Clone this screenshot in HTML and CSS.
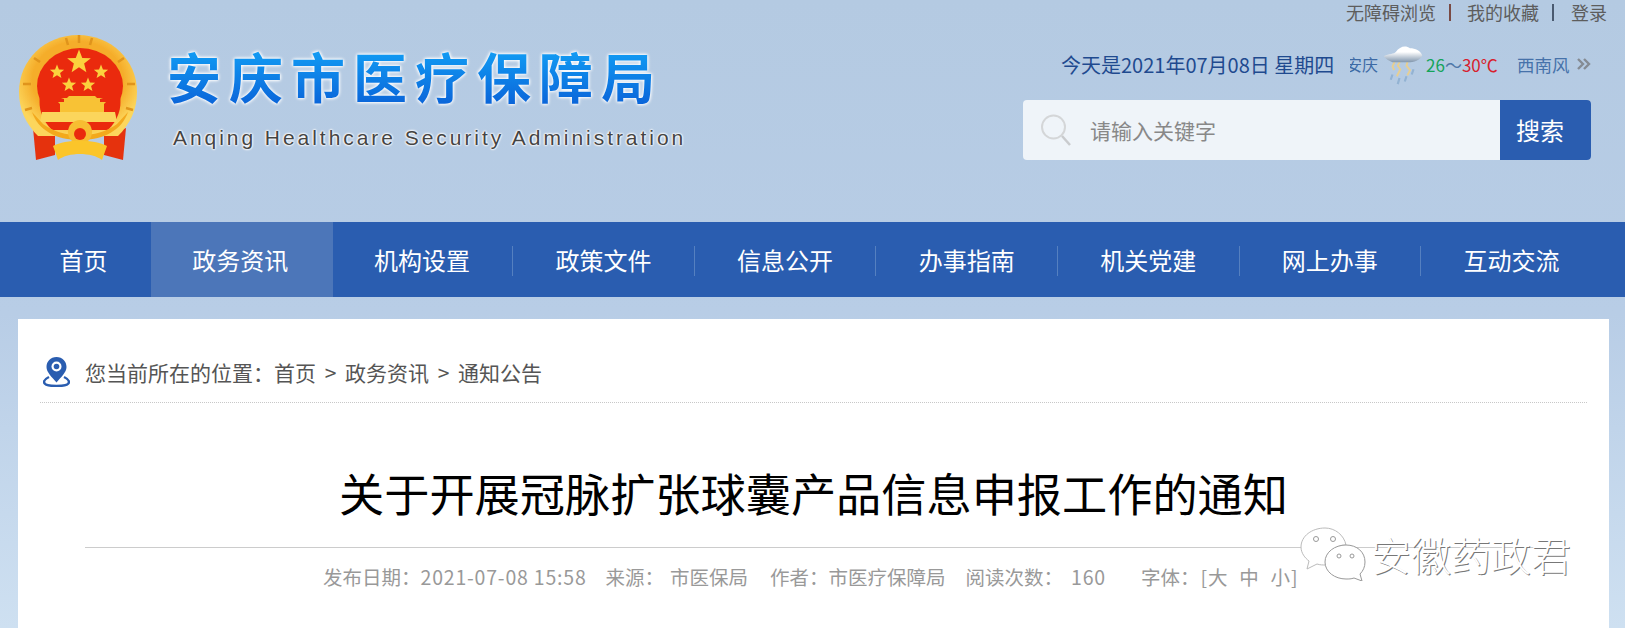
FILE: index.html
```html
<!DOCTYPE html>
<html lang="zh-CN">
<head>
    <meta charset="UTF-8">
    <title>关于开展冠脉扩张球囊产品信息申报工作的通知</title>
    <link rel="stylesheet" href="styles.css">
</head>
<body>
    <header class="header">
        <div class="logo">
            <svg class="emblem" viewBox="0 0 120 128">
                <defs>
                    <radialGradient id="ring" cx="50%" cy="45%" r="55%">
                        <stop offset="70%" stop-color="#f5ad2a"/>
                        <stop offset="100%" stop-color="#fcd65c"/>
                    </radialGradient>
                    <filter id="blur"><feGaussianBlur stdDeviation="0.45"/></filter>
                    <polygon id="star" points="0,-10 2.600,-3.200 9.500,-3.100 4.100,1.200 5.900,8.100 0,4.200 -5.900,8.100 -4.100,1.200 -9.500,-3.100 -2.600,-3.200"/>
                </defs>
                <g filter="url(#blur)">
                    <path d="M15 94l22 8v19l-19 5zM108 94l-22 8v19l19 5z" fill="#e5320f"/>
                    <path d="M60 1C27 1 1 26 1 58C1 76 8 90 20 102H100C112 90 119 76 119 58C119 26 93 1 60 1z" fill="url(#ring)"/>
                    <ellipse cx="62" cy="52" rx="43" ry="38" fill="#ea2a10"/>
                    <path d="M22 62C20 74 24 86 34 96H90C100 86 104 74 102 62z" fill="#ea2a10"/>
                    <path d="M48 4l2 7M74 4l-2 7M61 1v8M16 24l6 4M106 24l-6 4M5 50h8M117 50h-8M7 76l7-2M115 76l-7-2" stroke="#e0941a" stroke-width="2.500"/>
                    <use href="#star" transform="translate(61 28) scale(1.250)" fill="#fbd23e"/>
                    <use href="#star" transform="translate(39 38) scale(0.750)" fill="#fbd23e"/>
                    <use href="#star" transform="translate(83 38) scale(0.750)" fill="#fbd23e"/>
                    <use href="#star" transform="translate(51 51) scale(0.750)" fill="#fbd23e"/>
                    <use href="#star" transform="translate(70 51) scale(0.750)" fill="#fbd23e"/>
                    <path d="M42 78v-8l-2-2h6v-3l-3-1h6l2-2h26l2 2h6l-3 1v3h6l-2 2v8z" fill="#f8c234"/>
                    <path d="M24 78h73l2 10H22z" fill="#fbd55c"/>
                    <path d="M14 78C20 96 38 106 62 106S104 96 110 78L99 90C88 98 76 101 62 101S36 98 25 90z" fill="#f3a91f"/>
                    <circle cx="62" cy="98" r="12" fill="#f7bd30"/>
                    <circle cx="62" cy="100" r="6" fill="#ea2a10"/>
                    <path d="M35 112C48 105 76 105 89 112L84 126C74 118 50 118 40 126z" fill="#fbc52c"/>
                </g>
            </svg>
            <div class="logo-text">
                <div class="logo-cn">安庆市医疗保障局</div>
                <div class="logo-en">Anqing Healthcare Security Administration</div>
            </div>
        </div>
        <div class="tools">
            <div class="top-links">
                <a>无障碍浏览</a><i class="sep"></i><a>我的收藏</a><i class="sep sep-dark"></i><a>登录</a>
            </div>
            <div class="info-row">
                <span class="today">今天是2021年07月08日 星期四</span>
                <span class="city"><span>安庆</span></span>
                <svg class="weather-icon" viewBox="0 0 48 48">
                    <defs>
                        <filter id="soft"><feGaussianBlur stdDeviation="0.8"/></filter>
                        <linearGradient id="cloud" x1="0" y1="0" x2="0" y2="1">
                            <stop offset="0.350" stop-color="#ffffff"/>
                            <stop offset="1" stop-color="#8196ad"/>
                        </linearGradient>
                    </defs>
                    <g filter="url(#soft)">
                        <path d="M22 18l-4 8 3 4-4 8M30 18l-2 8 4 5-3 6M15 20l-3 7 2 4" fill="none" stroke="#e7cf92" stroke-width="2.200"/>
                        <path d="M12 36l-2 6M20 40l-2 7M28 38l-2 6M36 30l-2 6" stroke="#93b3d3" stroke-width="2.500"/>
                        <path d="M2 15C8 12 14 13 16 10C20 4 27 2 32 6C38 6 44 9 46 14C44 20 36 22 30 22H12C8 20 4 18 2 15z" fill="url(#cloud)"/>
                    </g>
                </svg>
                <span class="temp"><b class="low">26</b>～<b class="high">30</b><b class="high">℃</b></span>
                <span class="wind">西南风</span>
                <svg class="more" viewBox="0 0 14 14">
                    <path d="M1 2l5 5-5 5M7 2l5 5-5 5" fill="none" stroke="#858b93" stroke-width="2.400"/>
                </svg>
            </div>
            <form class="search">
                <svg class="search-icon" viewBox="0 0 32 32">
                    <circle cx="13.500" cy="13" r="11.500" fill="none" stroke="#d4d6d8" stroke-width="2"/>
                    <path d="M22 22l8 9" stroke="#c9cbce" stroke-width="2.500"/>
                </svg>
                <span class="search-hint">请输入关键字</span>
                <span class="search-btn">搜索</span>
            </form>
        </div>
    </header>

    <nav class="nav">
        <a class="nav-first">首页</a>
        <a class="active">政务资讯</a>
        <a class="no-line">机构设置</a>
        <a>政策文件</a>
        <a>信息公开</a>
        <a>办事指南</a>
        <a>机关党建</a>
        <a>网上办事</a>
        <a>互动交流</a>
    </nav>

    <main class="panel">
        <div class="crumbs">
            <svg class="pin" viewBox="0 0 27 31">
                <path d="M13.500 1C7.500 1 3.500 5.500 3.500 11C3.500 16.500 9 21 13.500 26.500C18 21 23.500 16.500 23.500 11C23.500 5.500 19.500 1 13.500 1z" fill="#2a5db0"/>
                <circle cx="13.500" cy="10.500" r="5" fill="#fff"/>
                <circle cx="13.500" cy="10.500" r="2.800" fill="#2a5db0"/>
                <path d="M6 21C3 22.500 1 24 1 26C1 29 7 30 13.500 30S26 29 26 26C26 24 24 22.500 21 21" fill="none" stroke="#2a5db0" stroke-width="2.500"/>
            </svg>
            <span>您当前所在的位置：首页 &gt; 政务资讯 &gt; 通知公告</span>
        </div>
        <h1 class="title">关于开展冠脉扩张球囊产品信息申报工作的通知</h1>
        <div class="meta">
            <span class="m-date">发布日期：<span class="num">2021-07-08 15:58</span></span>
            <span class="m-src">来源：</span>
            <span class="m-org">市医保局</span>
            <span class="m-author">作者：市医疗保障局</span>
            <span class="m-read">阅读次数：</span>
            <span class="m-count num">160</span>
            <span class="m-font">字体：</span>
            <span class="m-size">[大&nbsp;&nbsp;中&nbsp;&nbsp;小]</span>
        </div>
    </main>

    <div class="watermark">
        <svg class="wx" viewBox="0 0 66 54">
            <path d="M25 1C12 1 1 9 1 20C1 26 5 31 9 34L7 42L17 37C20 38 23 38 26 38C26 26 36 18 46 18C44 8 35 1 25 1z" fill="#fff" stroke="#bbb" stroke-width="1"/>
            <path d="M46 18C35 18 25 25 25 35C25 45 35 52 46 52C49 52 51 52 54 51L62 54L60 47C63 44 65 40 65 35C65 25 57 18 46 18z" fill="#fff" stroke="#999" stroke-width="1"/>
            <circle cx="16" cy="12" r="2.500" fill="#fff" stroke="#999"/>
            <circle cx="33" cy="12" r="2.500" fill="#fff" stroke="#999"/>
            <circle cx="39" cy="29" r="2" fill="#fff" stroke="#999"/>
            <circle cx="52" cy="29" r="2" fill="#fff" stroke="#999"/>
        </svg>
        <span class="wx-name">安徽药政君</span>
    </div>
</body>
</html>
```

FILE: styles.css
```css
* {
    box-sizing: border-box;
}
html, body {
    margin: 0;
    height: 628px;
    overflow: hidden;
}
body {
    font-family: "Noto Sans CJK SC", "Open Sans", sans-serif;
    background: linear-gradient(#b4cae2, #b8cde6 50%, #cee0f1);
    color: #333;
    position: relative;
}
.header {
    height: 222px;
    display: flex;
    justify-content: space-between;
}
.logo {
    display: flex;
    padding: 34px 0 0 18px;
}
.emblem {
    width: 120px;
    height: 128px;
}
.logo-text {
    margin-left: 29px;
    padding-top: 11px;
}
.logo-cn {
    font-size: 54px;
    line-height: 62px;
    font-weight: 700;
    letter-spacing: 8px;
    white-space: nowrap;
    background: linear-gradient(#12a2f7, #0a62d8);
    -webkit-background-clip: text;
    background-clip: text;
    color: transparent;
    filter: drop-shadow(0 0 1.5px #fff) drop-shadow(0 0 1.5px #fff);
}
.logo-en {
    font-family: "Liberation Sans", sans-serif;
    font-size: 21px;
    line-height: 24px;
    letter-spacing: 2.95px;
    margin: 19px 0 0 6px;
    color: #444;
    white-space: nowrap;
    text-shadow: 0 0 2px #fff, 0 0 2px #fff, 0 0 2px #fff, 0 0 3px #fff;
}
.tools {
    width: 602px;
    padding-right: 34px;
    display: flex;
    flex-direction: column;
    align-items: flex-end;
}
.top-links {
    display: flex;
    align-items: center;
    height: 24px;
    font-size: 18px;
    color: #5d5d5d;
    margin-right: -16px;
}
.sep {
    width: 2px;
    height: 17px;
    margin: 0 16px 0 13px;
    background: #7a4a44;
}
.sep-dark {
    margin-right: 17px;
    background: #4a5a70;
}
.info-row {
    display: flex;
    align-items: center;
    height: 48px;
    margin-top: 16px;
    width: 100%;
    padding-left: 38px;
}
.today {
    font-size: 20px;
    color: #1f4a8f;
    white-space: nowrap;
    width: 294px;
}
.city {
    width: 28px;
    overflow: hidden;
    font-size: 16px;
    color: #3d6aa5;
    direction: rtl;
    white-space: nowrap;
    flex: none;
}
.weather-icon {
    width: 42px;
    height: 46px;
    flex: none;
    margin: 0 2px 0 4px;
}
.temp {
    font-size: 17px;
    color: #4f77a8;
    width: 91px;
    white-space: nowrap;
    flex: none;
}
.temp b {
    font-weight: 400;
}
.low {
    color: #14a45a;
}
.high {
    color: #d8202c;
}
.wind {
    font-size: 17.500px;
    color: #4672aa;
    width: 60px;
    white-space: nowrap;
    flex: none;
}
.more {
    width: 14px;
    height: 14px;
    flex: none;
}
.search {
    display: flex;
    align-items: center;
    width: 568px;
    height: 60px;
    margin-top: 12px;
    background: #eff4f9;
    border-radius: 4px;
    overflow: hidden;
}
.search-icon {
    width: 32px;
    height: 32px;
    margin: 0 18px 0 17px;
}
.search-hint {
    flex: 1;
    font-size: 21px;
    color: #888;
}
.search-btn {
    width: 91px;
    height: 100%;
    padding-left: 16px;
    font-size: 24px;
    line-height: 60px;
    color: #fff;
    background: #2a5db0;
}
.nav {
    display: flex;
    height: 75px;
    background: #2a5db0;
}
.nav a {
    width: 181.6px;
    flex: none;
    height: 100%;
    padding-right: 3px;
    display: flex;
    align-items: center;
    justify-content: center;
    font-size: 24px;
    color: #fff;
    position: relative;
}
.nav a::before {
    content: "";
    position: absolute;
    left: -2px;
    top: 24px;
    height: 30px;
    width: 1px;
    background: #5580c0;
}
.nav .nav-first {
    width: 151px;
    padding: 0 0 0 16px;
}
.nav .nav-first::before,
.nav .active::before,
.nav .no-line::before {
    display: none;
}
.nav .active {
    background: #4c76b9;
}
.panel {
    margin: 22px 16px 0 18px;
    padding: 0 22px;
    height: 309px;
    background: #fff;
}
.crumbs {
    display: flex;
    align-items: center;
    height: 84px;
    padding: 22px 0 0 3px;
    border-bottom: 1px dotted #c8c8c8;
    font-size: 21px;
    word-spacing: 4px;
    color: #555;
}
.pin {
    width: 27px;
    height: 31px;
    margin-right: 15px;
}
.title {
    margin: 0 45px;
    height: 145px;
    padding-top: 57px;
    border-bottom: 1px solid #ccc;
    font-size: 45.2px;
    line-height: 66px;
    font-weight: 400;
    color: #000;
    text-align: center;
    white-space: nowrap;
}
.meta {
    display: flex;
    padding: 15px 0 0 283px;
    font-size: 19.5px;
    line-height: 28px;
    color: #999;
    white-space: nowrap;
}
.num {
    letter-spacing: 0.8px;
}
.m-src {
    margin-left: 19px;
}
.m-org {
    margin-left: 6px;
}
.m-author {
    margin-left: 22px;
}
.m-read {
    margin-left: 20px;
}
.m-count {
    margin-left: 8px;
}
.m-font {
    margin-left: 35px;
}
.m-size {
    margin-left: 1px;
    letter-spacing: 1px;
}
.watermark {
    position: absolute;
    left: 1300px;
    top: 527px;
    display: flex;
    align-items: center;
}
.wx {
    width: 66px;
    height: 54px;
}
.wx-name {
    margin-left: 5px;
    font-size: 40px;
    line-height: 54px;
    font-weight: 300;
    color: #fff;
    white-space: nowrap;
    text-shadow: 1px 1px 0 #777;
}
```
